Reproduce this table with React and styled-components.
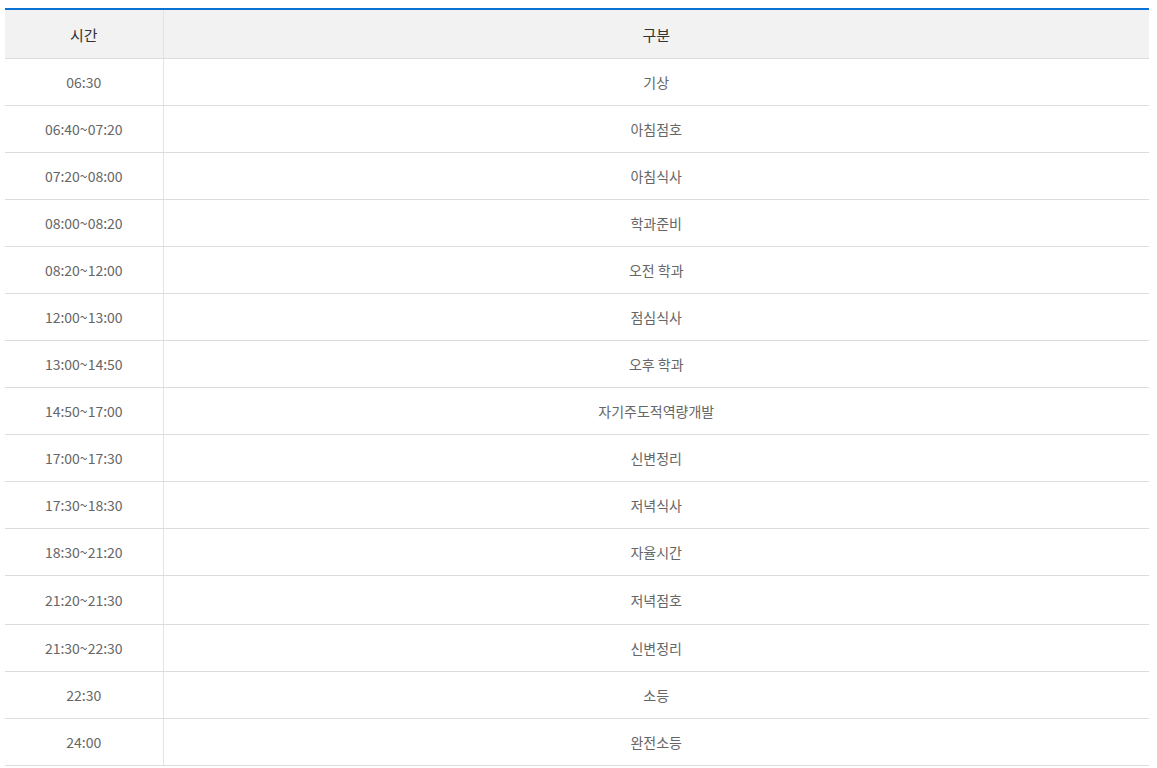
import React from "react";
import styled, { createGlobalStyle } from "styled-components";

const GlobalStyle = createGlobalStyle`
  html, body { margin: 0; padding: 0; background: #fff; }
  body { font-family: "Noto Sans CJK KR", "Noto Sans", sans-serif; }
`;

const Wrap = styled.div`
  padding: 8px 8px 0 5px;
`;

const Table = styled.table`
  width: 1144px;
  border-collapse: collapse;
  border-spacing: 0;
  border-top: 2px solid #0b72d3;
  table-layout: fixed;
`;

const Th = styled.th`
  height: 48px;
  padding: 0;
  background: #f2f2f2;
  color: #333;
  font-size: 15px;
  font-weight: 400;
  text-align: center;
  border-bottom: 1px solid #dcdcdc;
  border-left: 1px solid #e4e4e4;
  &:first-child { border-left: 0; }
`;

const Td = styled.td`
  height: ${(p) => (p.$tall ? 48 : 46)}px;
  padding: 0;
  color: #666;
  font-size: 14px;
  text-align: center;
  border-bottom: 1px solid #dcdcdc;
  border-left: 1px solid #e4e4e4;
  &:first-child { border-left: 0; }
`;

const rows = [
  ["06:30", "기상"],
  ["06:40~07:20", "아침점호"],
  ["07:20~08:00", "아침식사"],
  ["08:00~08:20", "학과준비"],
  ["08:20~12:00", "오전 학과"],
  ["12:00~13:00", "점심식사"],
  ["13:00~14:50", "오후 학과"],
  ["14:50~17:00", "자기주도적역량개발"],
  ["17:00~17:30", "신변정리"],
  ["17:30~18:30", "저녁식사"],
  ["18:30~21:20", "자율시간"],
  ["21:20~21:30", "저녁점호", true],
  ["21:30~22:30", "신변정리"],
  ["22:30", "소등"],
  ["24:00", "완전소등"],
];

export default function App() {
  return (
    <>
      <GlobalStyle />
      <Wrap>
        <Table>
          <colgroup>
            <col style={{ width: 158 }} />
            <col />
          </colgroup>
          <thead>
            <tr>
              <Th>시간</Th>
              <Th>구분</Th>
            </tr>
          </thead>
          <tbody>
            {rows.map(([t, d, tall], i) => (
              <tr key={i}>
                <Td $tall={tall}>{t}</Td>
                <Td $tall={tall}>{d}</Td>
              </tr>
            ))}
          </tbody>
        </Table>
      </Wrap>
    </>
  );
}
